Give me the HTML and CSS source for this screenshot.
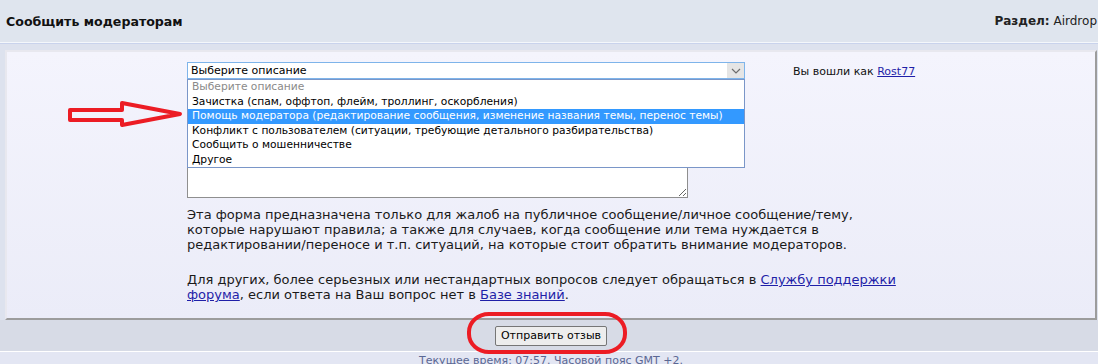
FILE: index.html
```html
<!DOCTYPE html>
<html lang="ru">
  <head>
    <meta charset="UTF-8" />
    <meta name="viewport" content="width=device-width, initial-scale=1.0" />
    <title>Сообщить модераторам</title>
    <link rel="stylesheet" href="styles.css">
  </head>
  <body>
    <div class="page">
      <div class="cat-bar">
        <h2>Сообщить модераторам</h2>
        <div class="forum-name"><b>Раздел:</b> Airdrop</div>
      </div>
      <div class="panel-wrap">
        <div class="panel">
          <div class="form-row">
            <div class="form-col">
              <div class="select-box">
                <div class="select">
                  <span>Выберите описание</span>
                  <span class="select-btn">
                    <svg width="10" height="6" viewBox="0 0 10 6"><polyline points="1,1 5,5 9,1" fill="none" stroke="#6d6d6d" stroke-width="1.2" /></svg>
                  </span>
                </div>
                <ul class="options">
                  <li class="muted">Выберите описание</li>
                  <li>Зачистка (спам, оффтоп, флейм, троллинг, оскорбления)</li>
                  <li class="active">Помощь модератора (редактирование сообщения, изменение названия темы, перенос темы)</li>
                  <li>Конфликт с пользователем (ситуации, требующие детального разбирательства)</li>
                  <li>Сообщить о мошенничестве</li>
                  <li>Другое</li>
                </ul>
              </div>
              <textarea class="message"></textarea>
            </div>
            <div class="user-col">Вы вошли как <a href="#">Rost77</a></div>
          </div>
          <div class="explain">
            <p>Эта форма предназначена только для жалоб на публичное сообщение/личное сообщение/тему, которые нарушают правила; а также для случаев, когда сообщение или тема нуждается в редактировании/переносе и т.п. ситуаций, на которые стоит обратить внимание модераторов.</p>
            <p class="more">Для других, более серьезных или нестандартных вопросов следует обращаться в <a href="#">Службу поддержки форума</a>, если ответа на Ваш вопрос нет в <a href="#">Базе знаний</a>.</p>
          </div>
        </div>
      </div>
      <div class="submit-bar">
        <button class="btn">Отправить отзыв</button>
      </div>
      <div class="footer">Текущее время: 07:57. Часовой пояс GMT +2.</div>

      <svg class="mark-arrow" width="130" height="40" viewBox="0 0 130 40">
        <polygon points="4,12 56,12 56,5 114,16 56,27 56,22 4,22" fill="none" stroke="#ec1c24" stroke-width="4" stroke-linejoin="round" />
      </svg>
      <svg class="mark-ring" width="164" height="46" viewBox="0 0 164 46">
        <rect x="3" y="3" width="156" height="38" rx="20" ry="18" fill="none" stroke="#ec1c24" stroke-width="4" />
      </svg>
    </div>
  </body>
</html>
```

FILE: styles.css
```css
body {
  margin: 0;
  font-family: "DejaVu Sans", Verdana, sans-serif;
  color: #111111;
  background-color: #e3e6f3;
  overflow: hidden;
}
.page {
  position: relative;
  width: 1098px;
  height: 364px;
  overflow: hidden;
}
.cat-bar {
  display: flex;
  justify-content: space-between;
  align-items: center;
  height: 42px;
  padding: 0 1px 0 6px;
  background-color: #dfe5ee;
  border-bottom: 1px solid #f4f7fb;
  white-space: nowrap;
}
.cat-bar h2 {
  margin: 0;
  font-size: 12.6px;
  font-weight: bold;
  color: #111111;
}
.forum-name {
  font-size: 12px;
  color: #222222;
}
.panel-wrap {
  background-color: #dde2ee;
  border-top: 1px solid #c9d3ec;
  padding: 6px 1px 0 5px;
}
.panel {
  height: 266px;
  background: linear-gradient(#f4f4fd, #ebecf8);
  border: 2px solid #9c9c9c;
  border-top-color: #e8e8ef;
  border-left-color: #e8e8ef;
}
.form-row {
  display: flex;
  padding: 10px 0 0 180px;
}
.form-col {
  width: 558px;
}
.select-box {
  position: relative;
}
.select {
  display: flex;
  justify-content: space-between;
  align-items: center;
  height: 15px;
  border: 1px solid #7eb4ea;
  background-color: #ffffff;
  padding-left: 3px;
  font-size: 11px;
  color: #000000;
}
.select-btn {
  display: flex;
  align-items: center;
  justify-content: center;
  width: 17px;
  height: 15px;
  background-color: #e5e5e5;
}
.options {
  position: absolute;
  top: 17px;
  left: 0;
  right: 0;
  z-index: 2;
  margin: 0;
  padding: 0;
  list-style: none;
  background-color: #ffffff;
  border: 1px solid #7a96c8;
  font-size: 10.7px;
  color: #000000;
}
.options li {
  height: 14.5px;
  line-height: 14.5px;
  padding-left: 4px;
  white-space: nowrap;
}
.options .muted {
  color: #8a8a8a;
}
.options .active {
  background-color: #3399ff;
  color: #ffffff;
}
.message {
  display: block;
  box-sizing: border-box;
  width: 501px;
  height: 115px;
  margin-top: 4px;
  border: 1px solid #8f8f8f;
  background-color: #ffffff;
}
.user-col {
  margin-left: 48px;
  padding-top: 3px;
  font-size: 11px;
  color: #111111;
}
a {
  color: #1f1fa8;
}
.explain {
  width: 724px;
  margin: 9px 0 0 180px;
  font-size: 13px;
  line-height: 15px;
  color: #1a1a1a;
}
.explain p {
  margin: 0;
}
.explain .more {
  margin-top: 20px;
}
.submit-bar {
  display: flex;
  justify-content: center;
  align-items: center;
  height: 31px;
  padding-left: 4px;
  background-color: #d7dbe6;
  border-bottom: 1px solid #ffffff;
}
.btn {
  height: 20px;
  width: 112px;
  padding: 0;
  font-family: "DejaVu Sans", Verdana, sans-serif;
  font-size: 11px;
  color: #000000;
  background-color: #ededed;
  border: 1px solid #767676;
  border-radius: 2px;
}
.footer {
  padding-top: 2px;
  text-align: center;
  font-size: 11px;
  color: #5a6793;
  padding-left: 4px;
}
.mark-arrow {
  position: absolute;
  left: 66px;
  top: 98px;
}
.mark-ring {
  position: absolute;
  left: 466px;
  top: 311px;
}
```
